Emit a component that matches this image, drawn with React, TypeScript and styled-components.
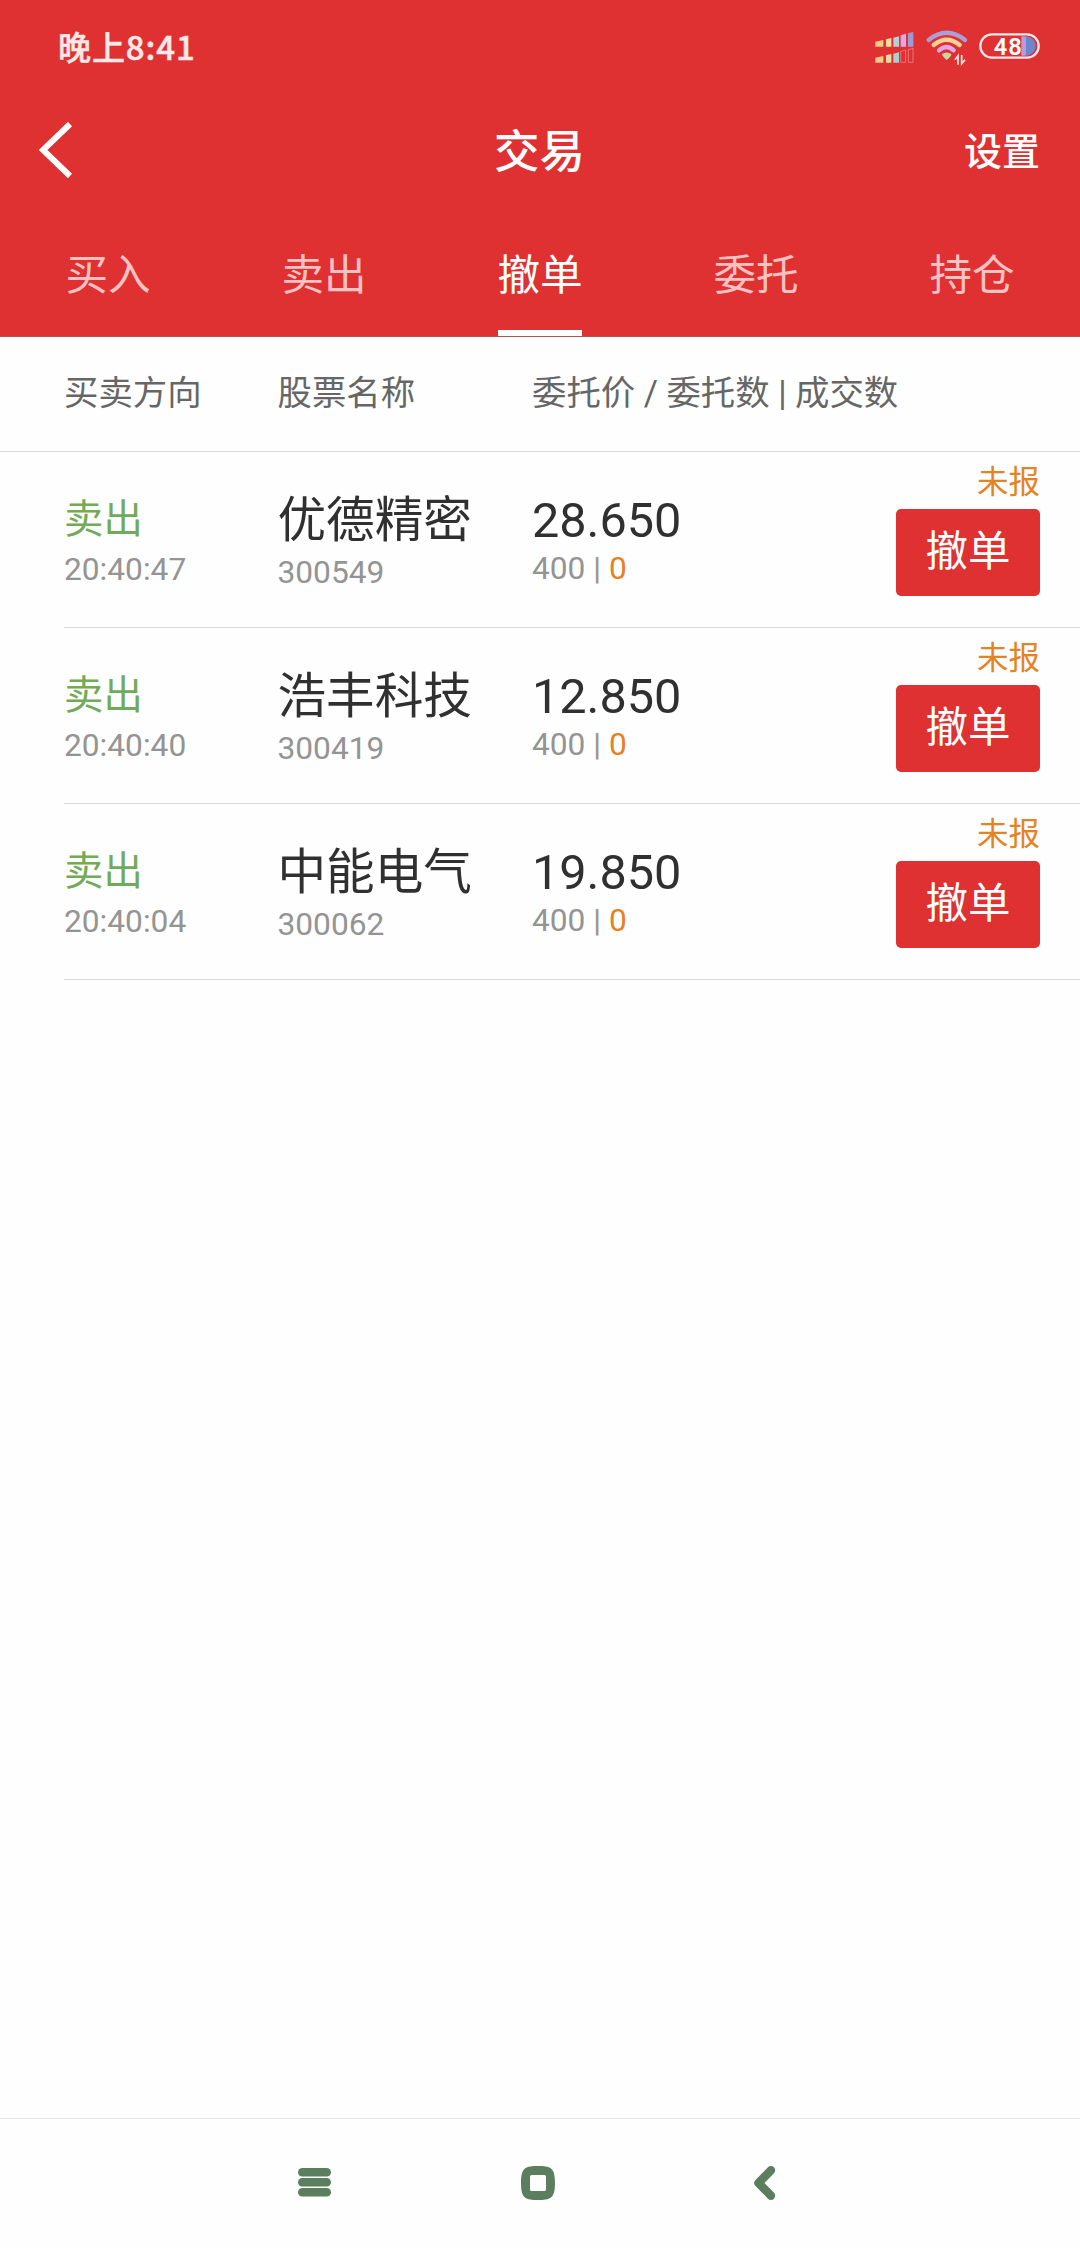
import React from "react";
import styled, { createGlobalStyle } from "styled-components";

const RED = "#df3032";
const ORANGE = "#e4831f";
const NAV_GREEN = "#5b7f5e";

const GlobalStyle = createGlobalStyle`
  body {
    margin: 0;
    background: #fefefe;
    font-family: Roboto, "Noto Sans CJK SC", sans-serif;
  }
  button {
    font-family: inherit;
    border: 0;
    padding: 0;
    background: none;
  }
`;

const Screen = styled.div`
  width: 1080px;
  height: 2248px;
  display: flex;
  flex-direction: column;
  background: #fefefe;
  overflow: hidden;
`;

const Header = styled.header`
  box-sizing: border-box;
  height: 337px;
  background: ${RED};
  border-bottom: 1px solid #a85456;
`;

const StatusBar = styled.div`
  box-sizing: border-box;
  height: 97px;
  padding: 20px 20px 0 58px;
  display: flex;
  justify-content: space-between;
`;

const Clock = styled.span`
  font-family: "Noto Sans CJK SC", sans-serif;
  font-size: 33px;
  font-weight: 500;
  line-height: 52px;
  letter-spacing: 0.9px;
  color: #ffe8e8;
  -webkit-text-stroke: 0.5px #ffe8e8;
`;

const TitleBar = styled.div`
  height: 112px;
  padding: 0 40px 0 39px;
  display: grid;
  grid-template-columns: 1fr auto 1fr;
  align-items: center;
`;

const BackButton = styled.button`
  display: flex;
  margin-bottom: 7px;
`;

const Title = styled.h1`
  margin: 0;
  font-size: 45.5px;
  font-weight: 500;
  line-height: 60px;
  color: #fff;
`;

const Settings = styled.button`
  justify-self: end;
  font-size: 38px;
  font-weight: 500;
  line-height: 60px;
  margin-bottom: 3px;
  color: #fff;
`;

const Tabs = styled.nav`
  display: grid;
  grid-template-columns: repeat(5, 1fr);
`;

const Tab = styled.div<{ $active?: boolean }>`
  display: flex;
  flex-direction: column;
  align-items: center;
  padding-top: 12px;
  font-size: 42.6px;
  line-height: 108px;
  font-weight: 400;
  color: ${(p) => (p.$active ? "#fff" : "#ffc2c3")};
`;

const Underline = styled.span`
  width: 84px;
  height: 6px;
  margin-top: 1px;
  background: #fff;
`;

const columns = `
  display: grid;
  grid-template-columns: 213.5px 254.5px 1fr auto;
`;

const ColumnHeads = styled.div`
  ${columns}
  padding-left: 64px;
  font-size: 34.4px;
  line-height: 113px;
  height: 114px;
  color: #666;
  white-space: nowrap;
  border-bottom: 1px solid #dadada;
`;

const Order = styled.div`
  ${columns}
  box-sizing: border-box;
  height: 176px;
  margin-left: 64px;
  padding-right: 40px;
  border-bottom: 1px solid #dadada;
`;

const Cell = styled.div<{ $gap: number }>`
  display: flex;
  flex-direction: column;
  gap: ${(p) => p.$gap}px;
  padding-top: 42px;
  white-space: nowrap;
`;

const Side = styled.span`
  font-size: 39.4px;
  line-height: 51px;
  color: #71ab56;
`;

const Main = styled.span`
  font-size: 48.6px;
  line-height: 53px;
  color: #303030;
`;

const Sub = styled.span`
  font-size: 31.7px;
  line-height: 36px;
  color: #949494;
`;

const Filled = styled.span`
  color: ${ORANGE};
`;

const Action = styled.div`
  display: flex;
  flex-direction: column;
  align-items: flex-end;
  gap: 8px;
  padding-top: 13px;
`;

const State = styled.span`
  font-size: 31.5px;
  line-height: 36px;
  color: ${ORANGE};
`;

const CancelButton = styled.button`
  box-sizing: border-box;
  width: 144px;
  height: 87px;
  padding-bottom: 2px;
  border-radius: 5px;
  background: ${RED};
  font-size: 42.5px;
  line-height: 85px;
  color: #fff;
`;

const Spacer = styled.div`
  flex: 1;
`;

const SystemNav = styled.footer`
  box-sizing: border-box;
  height: 130px;
  padding: 46px 302px 0 298px;
  display: flex;
  justify-content: space-between;
  border-top: 1px solid #e4e4e4;
`;

const StatusIcons = () => (
  <svg width="200" height="60" viewBox="0 0 600 180">
    <path d="M46 65l24-5v20H46z" fill="#fbc98a" />
    <path d="M78 58l16-4v26H78z" fill="#f1dfa0" />
    <path d="M100 53l17-4v31h-17z" fill="#b9cfd8" />
    <path d="M122 46l16-5v39h-16z" fill="#dfa8e6" />
    <path d="M144 40l16-4v44h-16z" fill="#9c9bd8" />
    <path d="M46 113l24-5v20H46z" fill="#fbc98a" />
    <path d="M78 106l16-4v26H78z" fill="#e6dba0" />
    <path d="M100 101l17-4v31h-17z" fill="#a9d0ce" />
    <path d="M122 95l15-5v37h-15zM145 89l14-4v42h-14z" fill="none" stroke="#f08080" strokeWidth="2.5" />
    <g fill="none" strokeWidth="13" strokeLinecap="round">
      <path d="M206 60Q260 17 315 60" stroke="#a9a0d8" />
      <path d="M221 75Q260 43 299 75" stroke="#fbd295" />
      <path d="M237 91Q260 71 281 91" stroke="#e3a5e3" />
    </g>
    <path d="M246 102q14-9 28 0q1 6-14 18q-14-12-14-18z" fill="#c5d99e" />
    <path d="M285 119l9-12v27M315 119l-10 12v-26" fill="none" stroke="#ffe8e8" strokeWidth="5" />
    <path d="M484 49h8a29 29 0 0 1 0 58h-8z" fill="#b59be0" />
    <path d="M498 49a29 29 0 0 1 0 58z" fill="#6f86cc" />
    <rect x="361" y="43" width="175" height="70" rx="35" fill="none" stroke="#ffe8e8" strokeWidth="7" />
    <text x="401" y="104" fontFamily="Roboto, sans-serif" fontSize="71" fontWeight="600" fill="#fff" textLength="84">
      48
    </text>
  </svg>
);

const BackIcon = () => (
  <svg width="34" height="56" viewBox="0 0 34 56">
    <path d="M31 2L4 28l27 26" fill="none" stroke="#fff" strokeWidth="6" />
  </svg>
);

const MenuIcon = () => (
  <svg width="34" height="34" viewBox="0 0 34 34" fill={NAV_GREEN}>
    <rect x="0" y="3" width="33" height="8.6" rx="4.3" />
    <rect x="0" y="13" width="33" height="8.6" rx="4.3" />
    <rect x="0" y="23" width="33" height="8.6" rx="4.3" />
  </svg>
);

const HomeIcon = () => (
  <svg width="34" height="35" viewBox="0 0 34 35">
    <path
      fill={NAV_GREEN}
      fillRule="evenodd"
      d="M17 1C29 1 34 2 34 18S29 35 17 35S0 34 0 18S5 1 17 1zM10.5 10Q9 10 9 11.500V24.500Q9 26 10.500 26H23.500Q25 26 25 24.500V11.500Q25 10 23.500 10z"
    />
  </svg>
);

const ReturnIcon = () => (
  <svg width="34" height="35" viewBox="0 0 34 35">
    <path
      d="M27 5.200L14.500 18L27 30.800"
      fill="none"
      stroke={NAV_GREEN}
      strokeWidth="8.400"
      strokeLinecap="round"
      strokeLinejoin="round"
    />
  </svg>
);

const tabs = ["买入", "卖出", "撤单", "委托", "持仓"];

const orders = [
  { time: "20:40:47", name: "优德精密", code: "300549", price: "28.650" },
  { time: "20:40:40", name: "浩丰科技", code: "300419", price: "12.850" },
  { time: "20:40:04", name: "中能电气", code: "300062", price: "19.850" },
];

export default function App() {
  return (
    <Screen>
      <GlobalStyle />
      <Header>
        <StatusBar>
          <Clock>晚上8:41</Clock>
          <StatusIcons />
        </StatusBar>
        <TitleBar>
          <BackButton aria-label="返回">
            <BackIcon />
          </BackButton>
          <Title>交易</Title>
          <Settings>设置</Settings>
        </TitleBar>
        <Tabs>
          {tabs.map((t) => (
            <Tab key={t} $active={t === "撤单"}>
              {t}
              {t === "撤单" && <Underline />}
            </Tab>
          ))}
        </Tabs>
      </Header>
      <ColumnHeads>
        <span>买卖方向</span>
        <span>股票名称</span>
        <span>委托价 / 委托数 | 成交数</span>
      </ColumnHeads>
      {orders.map((o) => (
        <Order key={o.code}>
          <Cell $gap={7}>
            <Side>卖出</Side>
            <Sub>{o.time}</Sub>
          </Cell>
          <Cell $gap={8}>
            <Main>{o.name}</Main>
            <Sub>{o.code}</Sub>
          </Cell>
          <Cell $gap={4}>
            <Main>{o.price}</Main>
            <Sub>
              400 | <Filled>0</Filled>
            </Sub>
          </Cell>
          <Action>
            <State>未报</State>
            <CancelButton>撤单</CancelButton>
          </Action>
        </Order>
      ))}
      <Spacer />
      <SystemNav>
        <MenuIcon />
        <HomeIcon />
        <ReturnIcon />
      </SystemNav>
    </Screen>
  );
}
